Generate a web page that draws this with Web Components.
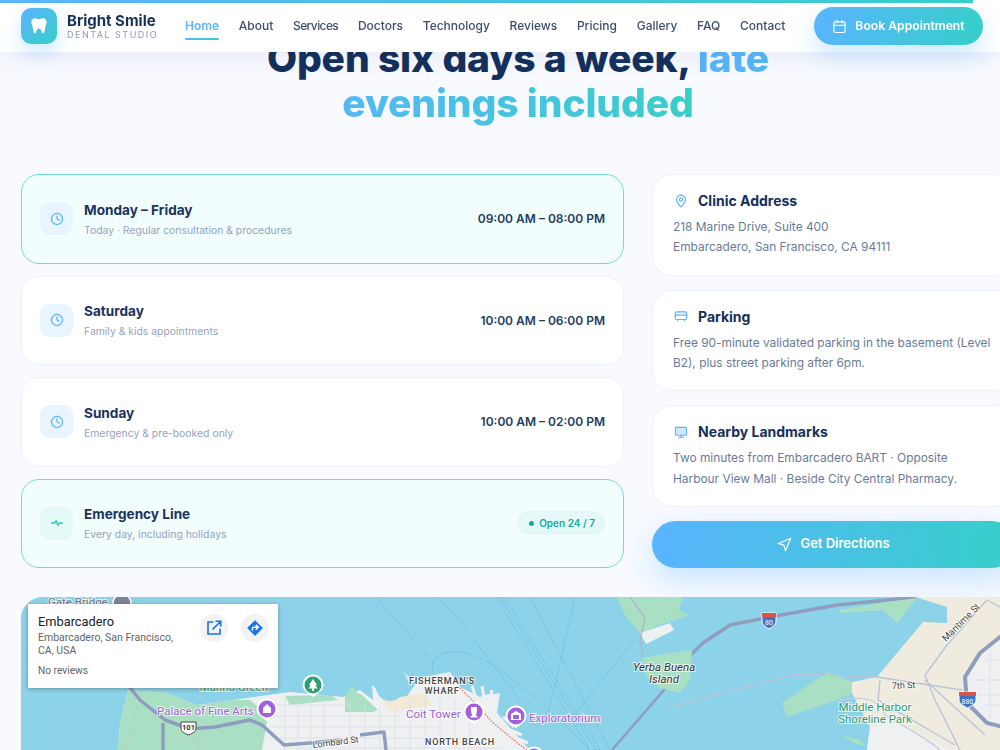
<!DOCTYPE html>
<html lang="en">
<head>
<meta charset="utf-8">
<title>Bright Smile Dental Studio</title>
<style>
  html, body { margin: 0; padding: 0; height: 750px; overflow: hidden; background: #f8faff; }
  body { font-family: Inter, "Liberation Sans", sans-serif; }
</style>
</head>
<body>
<site-header></site-header>
<main-page>
  <h-title slot="title"></h-title>
  <hours-card slot="hours" active day="Monday – Friday" time="09:00 AM – 08:00 PM">Today · Regular consultation &amp; procedures</hours-card>
  <hours-card slot="hours" day="Saturday" time="10:00 AM – 06:00 PM">Family &amp; kids appointments</hours-card>
  <hours-card slot="hours" day="Sunday" time="10:00 AM – 02:00 PM">Emergency &amp; pre-booked only</hours-card>
  <hours-card slot="hours" active emergency day="Emergency Line">Every day, including holidays</hours-card>
  <info-card slot="info" icon="pin" heading="Clinic Address">218 Marine Drive, Suite 400<br>Embarcadero, San Francisco, CA 94111</info-card>
  <info-card slot="info" icon="park" heading="Parking">Free 90-minute validated parking in the basement (Level B2), plus street parking after 6pm.</info-card>
  <info-card slot="info" icon="screen" heading="Nearby Landmarks">Two minutes from Embarcadero BART · Opposite Harbour View Mall · Beside City Central Pharmacy.</info-card>
  <directions-button slot="info"></directions-button>
  <map-embed slot="map"></map-embed>
</main-page>

<script>
const HEAD_FONT = "font-family: Inter, 'Liberation Sans', sans-serif;";
const GRAD = "linear-gradient(100deg, #5ab4fe, #36cfc9)";

class SiteHeader extends HTMLElement {
  constructor() {
    super();
    this.attachShadow({ mode: 'open' });
  }
  connectedCallback() {
    const links = ['Home','About','Services','Doctors','Technology','Reviews','Pricing','Gallery','FAQ','Contact'];
    this.shadowRoot.innerHTML = `
    <style>
      :host { display: block; position: fixed; top: 0; left: 0; width: 1000px; height: 52px; z-index: 10; }
      .progress { position: absolute; top: 0; left: 0; width: 973px; height: 3px; background: linear-gradient(90deg, #5ab4fe, #36cfc9); z-index: 2; }
      header { box-sizing: border-box; height: 52px; padding: 0 17px 0 21px; display: flex; align-items: center;
        background: #fff; box-shadow: 0 6px 24px rgba(30,60,110,.07); }
      .brand { display: flex; align-items: center; gap: 10px; width: 164px; flex: none; }
      .logo { width: 36px; height: 36px; border-radius: 10px; background: linear-gradient(135deg, #5ab4fe, #36cfc9);
        display: flex; align-items: center; justify-content: center; box-shadow: 0 8px 20px rgba(90,180,254,.3); }
      .name { ${HEAD_FONT} font-weight: 700; font-size: 15px; line-height: 16px; color: #16305a; white-space: nowrap; }
      .tag { font-size: 9px; line-height: 11px; letter-spacing: 1.5px; color: #8a9bb8; white-space: nowrap; }
      nav { display: flex; gap: 19.700px; align-items: center; padding-bottom: 2px; }
      a { ${HEAD_FONT} font-weight: 500; font-size: 12px; color: #3c4d6e; position: relative; padding: 6px 0; white-space: nowrap; text-decoration: none; }
      a.services { letter-spacing: -.6px; }
      a.on { color: #5ab4fe; font-weight: 600; }
      a.on::after { content: ""; position: absolute; left: 0; right: 0; bottom: -1px; height: 2px; border-radius: 2px; background: ${GRAD}; }
      .cta { box-sizing: border-box; width: 169px; height: 38px; margin-left: auto; border-radius: 19px; background: ${GRAD}; color: #fff; flex: none;
        display: flex; align-items: center; justify-content: center; gap: 8px; ${HEAD_FONT} font-weight: 600; font-size: 12.200px; white-space: nowrap;
        box-shadow: 0 10px 26px rgba(90,180,254,.32); }
      .cta span { padding-bottom: 2px; }
    </style>
    <div class="progress"></div>
    <header>
      <div class="brand">
        <div class="logo"><svg width="20" height="20" viewBox="0 0 20 20"><path fill="#fff" d="M6 2.2c1.5 0 2.600.8 4 .8s2.500-.8 4-.8c2.500 0 3.800 2 3.600 4.400-.2 2-1 3.200-1.400 5-.4 2-.7 5.800-2.200 5.800-1.400 0-1.300-4.800-4-4.800s-2.600 4.800-4 4.800c-1.500 0-1.800-3.800-2.200-5.800-.4-1.800-1.200-3-1.400-5C2.200 4.200 3.500 2.200 6 2.200z"/></svg></div>
        <div><div class="name">Bright Smile</div><div class="tag">DENTAL STUDIO</div></div>
      </div>
      <nav>${links.map((l, i) => `<a class="${i === 0 ? 'on' : ''} ${l === 'Services' ? 'services' : ''}">${l}</a>`).join('')}</nav>
      <div class="cta">
        <svg width="15" height="15" viewBox="0 0 24 24" fill="none" stroke="#fff" stroke-width="1.800" stroke-linecap="round"><rect x="3" y="4.500" width="18" height="17" rx="2.500"/><path d="M3 10h18M8 2v4M16 2v4"/></svg>
        <span>Book Appointment</span>
      </div>
    </header>`;
  }
}

class HTitle extends HTMLElement {
  constructor() {
    super();
    this.attachShadow({ mode: 'open' });
  }
  connectedCallback() {
    this.shadowRoot.innerHTML = `
    <style>
      :host { display: block; text-align: center; }
      h1 { margin: 0; ${HEAD_FONT} font-weight: 800; font-size: 39px; line-height: 45px; letter-spacing: -.15px; color: #14305c; }
      span { background: linear-gradient(90deg, #5ab4fe, #36cfc9); -webkit-background-clip: text; background-clip: text; color: transparent; }
    </style>
    <h1>Open six days a week, <span>late<br>evenings included</span></h1>`;
  }
}

class HoursCard extends HTMLElement {
  constructor() {
    super();
    this.attachShadow({ mode: 'open' });
  }
  connectedCallback() {
    const em = this.hasAttribute('emergency');
    const icon = em
      ? `<path d="M3 12h5l2.500-4 3 8 2.500-4h5" stroke="#25bfb4"/>`
      : `<circle cx="12" cy="12" r="9.500"/><path d="M12 6.500V12l3.500 2"/>`;
    const right = em
      ? `<div class="badge"><i></i>Open 24 / 7</div>`
      : `<div class="time">${this.getAttribute('time')}</div>`;
    this.shadowRoot.innerHTML = `
    <style>
      :host { display: block; }
      .card { box-sizing: border-box; height: 89.500px; padding: 0 18px; display: flex; align-items: center; gap: 11px; border-radius: 18px;
        background: #fff; border: 1px solid #edf1f8; }
      :host([active]) .card { background: #f2fefd; border: 1px solid #6fdcd6; }
      .icon { width: 33px; height: 33px; border-radius: 10px; background: #e8f4ff; flex: none; display: flex; align-items: center; justify-content: center; }
      :host([emergency]) .icon { background: #e4f9f7; }
      .text { flex: 1; margin-top: 2px; }
      .day { ${HEAD_FONT} font-weight: 700; font-size: 13.600px; line-height: 18px; color: #1a335f; }
      .sub { font-size: 10.400px; line-height: 16px; margin-top: 4px; color: #94a3bd; }
      .time { font-weight: 600; font-size: 12px; color: #233c64; white-space: nowrap; }
      .badge { display: flex; align-items: center; gap: 5px; height: 24px; padding: 0 10px 0 12px; border-radius: 12px; background: #e4f9f7; color: #14a99d;
        ${HEAD_FONT} font-weight: 600; font-size: 10px; white-space: nowrap; }
      .badge i { width: 5px; height: 5px; border-radius: 50%; background: #14a99d; }
    </style>
    <div class="card">
      <div class="icon"><svg width="14" height="14" viewBox="0 0 24 24" fill="none" stroke="#5ab4fe" stroke-width="2.200" stroke-linecap="round" stroke-linejoin="round">${icon}</svg></div>
      <div class="text"><div class="day">${this.getAttribute('day')}</div><div class="sub"><slot></slot></div></div>
      ${right}
    </div>`;
  }
}

class InfoCard extends HTMLElement {
  constructor() {
    super();
    this.attachShadow({ mode: 'open' });
  }
  connectedCallback() {
    const icons = {
      pin: `<path d="M12 22s7.500-6.500 7.500-12.500a7.500 7.500 0 0 0-15 0C4.500 15.500 12 22 12 22z"/><circle cx="12" cy="9.500" r="2.800"/>`,
      park: `<rect x="2" y="5" width="20" height="13" rx="3"/><path d="M2.500 10.500h19M6 18v2M18 18v2"/>`,
      screen: `<rect x="2.500" y="4" width="19" height="13.500" rx="1.500" fill="#cfe8ff"/><path d="M12 17.500V21M8 21h8"/>`
    };
    this.shadowRoot.innerHTML = `
    <style>
      :host { display: block; }
      .card { box-sizing: border-box; height: 101.670px; padding: 14.500px 20px; border-radius: 20px; background: #fff; border: 1px solid #edf1f8; }
      .top { display: flex; align-items: center; gap: 10px; height: 22px; }
      .top svg { flex: none; margin-left: 1px; }
      h3 { margin: 0; ${HEAD_FONT} font-weight: 700; font-size: 14px; color: #16305a; }
      p { margin: 5.500px 0 0; font-size: 11.900px; line-height: 20.400px; color: #6b7a99; }
    </style>
    <div class="card">
      <div class="top"><svg width="14" height="14" viewBox="0 0 24 24" fill="none" stroke="#5ab4fe" stroke-width="2" stroke-linecap="round" stroke-linejoin="round">${icons[this.getAttribute('icon')]}</svg><h3>${this.getAttribute('heading')}</h3></div>
      <p><slot></slot></p>
    </div>`;
  }
}

class DirectionsButton extends HTMLElement {
  constructor() {
    super();
    this.attachShadow({ mode: 'open' });
  }
  connectedCallback() {
    this.shadowRoot.innerHTML = `
    <style>
      :host { display: block; }
      .btn { height: 47px; border-radius: 24px; background: ${GRAD}; color: #fff; display: flex; align-items: center; justify-content: center; gap: 8px;
        ${HEAD_FONT} font-weight: 600; font-size: 13px; box-shadow: 0 12px 30px rgba(90,180,254,.3); }
      span { padding-bottom: 3px; }
    </style>
    <div class="btn">
      <svg width="15" height="15" viewBox="0 0 24 24" fill="none" stroke="#fff" stroke-width="1.800" stroke-linejoin="round"><path d="M22 2 2 10.500l9 2.500 2.500 9z"/></svg>
      <span>Get Directions</span>
    </div>`;
  }
}

class MapEmbed extends HTMLElement {
  constructor() {
    super();
    this.attachShadow({ mode: 'open' });
  }
  connectedCallback() {
    const pin = (x, y, c, glyph) => `<g transform="translate(${x} ${y})">
      <path d="M-10.500 0a10.500 10.500 0 1 1 21 0c0 5-5 8-10.500 12C-5.500 8-10.500 5-10.500 0z" fill="#fff"/>
      <circle r="8.500" fill="${c}"/><path d="${glyph}" fill="#fff"/></g>`;
    const ROAD = '#8f9dbf';
    this.shadowRoot.innerHTML = `
    <style>
      :host { display: block; position: relative; height: 153px; border-radius: 22px 22px 0 0; overflow: hidden; background: #8cd2e8; }
      svg { display: block; }
      text { font-family: Roboto, "Liberation Sans", sans-serif; paint-order: stroke; stroke: rgba(255,255,255,.75); stroke-width: 2px; }
      .popup { position: absolute; left: 7px; top: 6.500px; box-sizing: border-box; width: 250px; height: 84px; background: #fff; padding: 10.500px 10px; font-family: Roboto, "Liberation Sans", sans-serif;
        box-shadow: 0 1px 4px rgba(0,0,0,.3); }
      .ttl { font-size: 12.800px; font-weight: 400; line-height: 16px; color: #202124; }
      .addr { font-size: 10.500px; line-height: 13px; margin-top: 1px; width: 150px; color: #5f6368; }
      .rev { font-size: 10.200px; line-height: 13px; margin-top: 7px; color: #5f6368; }
      .acts { position: absolute; top: 10px; right: 9.500px; display: flex; gap: 13px; }
      .acts div { width: 28px; height: 28px; border-radius: 50%; background: #f1f3f4; display: flex; align-items: center; justify-content: center; }
    </style>
    <svg width="994" height="153" viewBox="21 597 994 153">
      <rect x="21" y="597" width="994" height="153" fill="#8cd2e8"/>
      <!-- shipping lanes -->
      <g fill="none" stroke="#62b5d5" stroke-width=".7" stroke-dasharray="2 1.500">
        <path d="M376 597 440 670M438 597C470 630 480 650 520 700M496 597 590 750M500 597 596 750M504 597 600 750M530 597 610 750"/>
        <path d="M575 597C565 640 555 690 545 720M634 640 570 720M436 680C420 650 460 640 500 670S560 720 590 750"/>
      </g>
      <!-- san francisco land -->
      <path fill="#eff0f2" d="M118 750 120 723 128 690 167 693 197 705 233 700 290 692 343 697 360 690 373 700 372 685 390 702 407 696 420 678 450 672 460 687 480 697 500 693 497 713 527 747 530 750z"/>
      <path fill="#a9dfc3" d="M118 750 120 723 128 690 167 693 197 705 233 700 250 700 268 715 262 750z"/>
      <path fill="#a9dfc3" d="M345 697 352 685 356 692 362 695 378 710 372 712 345 712zM285 696 330 695 338 700 290 705z"/>
      <path fill="#f3ead6" d="M382 700 425 693 432 705 390 712z"/>
      <circle cx="390" cy="687" r="14" fill="#8cd2e8"/>
      <path fill="#eef0f2" d="M452 690 480 697 492 693 497 713 485 715 465 697z"/>
      <path fill="#dfe4ec" d="M404 672 414 682 409 684zM449 672 452 684 446 684z"/>
      <!-- street grid -->
      <g stroke="#dadee6" stroke-width=".8" fill="none">
        <path d="M270 705H350M270 716H400M270 727H440M270 738H470M290 748H500"/>
        <path d="M285 700V750M298 700V750M311 700V750M324 700V750M350 700V750M365 705V750M380 705V750M395 705V750M410 700V750M425 695V750M440 695V750M455 700V750M470 705V750"/>
      </g>
      <g fill="none" stroke="#b9d5c2" stroke-width="1"><path d="M140 700 125 750M175 700 200 750M150 735 220 745"/></g>
      <!-- pier teeth -->
      <g stroke="#f0f0f2" stroke-width="3" fill="none"><path d="M472 686 476 698M482 686 484 698M492 690 490 700M503 717 514 727M510 730 522 735M516 738 528 743"/></g>
      <!-- highways -->
      <g fill="none" stroke="${ROAD}" stroke-width="3.500" stroke-linejoin="round">
        <path d="M128 685 140 700 165 720 190 729 215 727 250 720 262 725 284 745 310 743 342 740"/>
        <path d="M163 723V750M360 735 384 732 386 750"/>
        <path d="M678 667 703 643 730 625 770 617 837 605 917 597"/>
        <path d="M670 683 612 750" stroke-width="2.500"/>
      </g>
      <path d="M460 688 480 708 492 722 520 745 530 752" fill="none" stroke="#e0685c" stroke-width="1.200" stroke-dasharray="1.500 1.500"/>
      <!-- islands -->
      <path fill="#a9dfc3" d="M617 597H683L679 610 690 615 668 622 640 633 625 615z"/>
      <path fill="#eff0f2" d="M640 633 670 623 674 630 646 644z"/>
      <path fill="none" stroke="#aeb8cc" stroke-width="1.500" d="M630 597 645 618 640 640 644 660 668 686"/>
      <path fill="#a9dfc3" d="M642 658 664 654 692 650 690 680 680 693 660 688 646 675z"/>
      <!-- east bay -->
      <path fill="#f0ebdf" d="M915 597H1015V750H867L870 727 852 693 852 682 877 677 923 622 947 623 947 607z"/>
      <path fill="#a9dfc3" d="M840 610 887 602 917 598 897 623 883 610 840 613z"/>
      <path fill="#a9dfc3" d="M782 703 827 672 852 682 852 693 837 700 787 717z"/>
      <path fill="#a9dfc3" d="M842 735 860 740 866 746 856 744z"/>
      <path fill="#eff0f2" d="M867 750 870 727 900 723 950 750zM1015 630 985 650 968 677 970 703 990 722 1015 727z"/>
      <g stroke="#dadee6" fill="none" stroke-width=".8"><path d="M975 680H1015M975 695H1015M985 660H1015M985 705H1015M990 650V720M1003 640V725"/></g>
      <g fill="none" stroke="#b9c4d6" stroke-width="1.400">
        <path d="M670 707 797 674 877 677 962 690"/>
        <path d="M947 645 987 600M947 645 925 675 935 700 960 750M880 680 878 700 955 745M925 680 985 735"/>
        <path d="M840 700C865 695 880 700 885 715 910 730 930 740 940 750" stroke="#c6cfdd"/>
        <path d="M987 600 1015 615"/>
      </g>
      <path fill="none" stroke="${ROAD}" stroke-width="4" d="M1015 625 980 653 965 677 967 703 987 723 1015 730"/>
      <!-- shields -->
      <g>
        <path d="M762 613h14v8c0 4-4 6-7 8-3-2-7-4-7-8z" fill="#3f72c4" stroke="#fff"/><path d="M762 613h14v4h-14z" fill="#d9534f"/>
        <text x="769" y="625" font-size="7" fill="#fff" text-anchor="middle" style="stroke:none">80</text>
        <path d="M959 692h17v8c0 4-5 6-8.500 8-3.500-2-8.500-4-8.500-8z" fill="#3f72c4" stroke="#fff"/><path d="M959 692h17v4h-17z" fill="#d9534f"/>
        <text x="967.500" y="704" font-size="7" fill="#fff" text-anchor="middle" style="stroke:none">880</text>
        <path d="M181 722h15v6c0 4-3 5-7.500 7-4.500-2-7.500-3-7.500-7z" fill="#fff" stroke="#444"/>
        <text x="188.500" y="730" font-size="7.500" font-weight="700" fill="#333" text-anchor="middle" style="stroke:none">101</text>
      </g>
      <!-- labels -->
      <g font-size="11.500" fill="#9c5fd0">
        <text x="157" y="715">Palace of Fine Arts</text>
        <text x="406" y="718">Coit Tower</text>
        <text x="529" y="722">Exploratorium</text>
      </g>
      <g font-size="9" fill="#444" font-weight="500" letter-spacing=".8" text-anchor="middle">
        <text x="442" y="684">FISHERMAN'S</text>
        <text x="442" y="694">WHARF</text>
        <text x="460" y="745">NORTH BEACH</text>
      </g>
      <g font-size="11.500" fill="#333" text-anchor="middle" font-style="italic">
        <text x="664" y="671">Yerba Buena</text>
        <text x="664" y="683">Island</text>
      </g>
      <g font-size="11.500" fill="#2f9a78" text-anchor="middle">
        <text x="875" y="711">Middle Harbor</text>
        <text x="875" y="723">Shoreline Park</text>
        <text x="268" y="691" text-anchor="end">Marina Green</text>
      </g>
      <g font-size="9" fill="#444">
        <text x="892" y="689" transform="rotate(-3 892 689)">7th St</text>
        <text x="946" y="642" transform="rotate(-45 946 642)" font-size="9.500">Maritime St</text>
        <text x="313" y="748" transform="rotate(-7 313 748)">Lombard St</text>
      </g>
      <text x="48" y="606" font-size="11.500" fill="#6b7280">Gate Bridge</text>
      <circle cx="122" cy="603" r="9" fill="#7b8494" stroke="#fff" stroke-width="1.500"/>
      ${pin(313, 685, '#2e9e73', 'M0-6 4 0H2.500L4.500 3.500H1V6H-1V3.500H-4.500L-2.500 0H-4z')}
      ${pin(267, 709, '#a35fe0', 'M-4 4V-1L0-5 4-1V4z')}
      ${pin(474, 712, '#a35fe0', 'M-3-5H3V-2L2 4H3.500V5.500H-3.500V4H-2L-3-2z')}
      ${pin(516, 716, '#a35fe0', 'M-5-2 0-5 5-2V4H-5zM-3-1V3H3V-1z')}
      ${pin(534, 757, '#a35fe0', 'M-4 4V-4H4V4z')}
    </svg>
    <div class="popup">
      <div class="ttl">Embarcadero</div>
      <div class="addr">Embarcadero, San Francisco, CA, USA</div>
      <div class="rev">No reviews</div>
      <div class="acts">
        <div><svg width="18" height="18" viewBox="0 0 24 24" fill="none" stroke="#1a73e8" stroke-width="2.200"><path d="M11 4H4v16h16v-7M14 3h7v7M21 3 10 14"/></svg></div>
        <div><svg width="18" height="18" viewBox="0 0 24 24"><path fill="#1a73e8" d="M12 1.500 22.500 12 12 22.500 1.500 12z"/><path d="M8.500 15.500V12.500c0-1 .7-1.500 1.500-1.500h5M13 7.800 16.500 11 13 14.200" fill="none" stroke="#fff" stroke-width="2"/></svg></div>
      </div>
    </div>`;
  }
}

class MainPage extends HTMLElement {
  constructor() {
    super();
    this.attachShadow({ mode: 'open' });
  }
  connectedCallback() {
    this.shadowRoot.innerHTML = `
    <style>
      :host { display: block; box-sizing: border-box; width: 994px; margin-left: 21px; padding-top: 35px; }
      .grid { display: grid; grid-template-columns: 603px 363px; gap: 28px; margin-top: 49px; }
      .hours { display: flex; flex-direction: column; gap: 12px; }
      .info { display: flex; flex-direction: column; gap: 14px; }
      .map { margin-top: 29px; }
    </style>
    <slot name="title"></slot>
    <div class="grid">
      <div class="hours"><slot name="hours"></slot></div>
      <div class="info"><slot name="info"></slot></div>
    </div>
    <div class="map"><slot name="map"></slot></div>`;
  }
}

customElements.define('site-header', SiteHeader);
customElements.define('h-title', HTitle);
customElements.define('hours-card', HoursCard);
customElements.define('info-card', InfoCard);
customElements.define('directions-button', DirectionsButton);
customElements.define('map-embed', MapEmbed);
customElements.define('main-page', MainPage);
</script>
</body>
</html>
